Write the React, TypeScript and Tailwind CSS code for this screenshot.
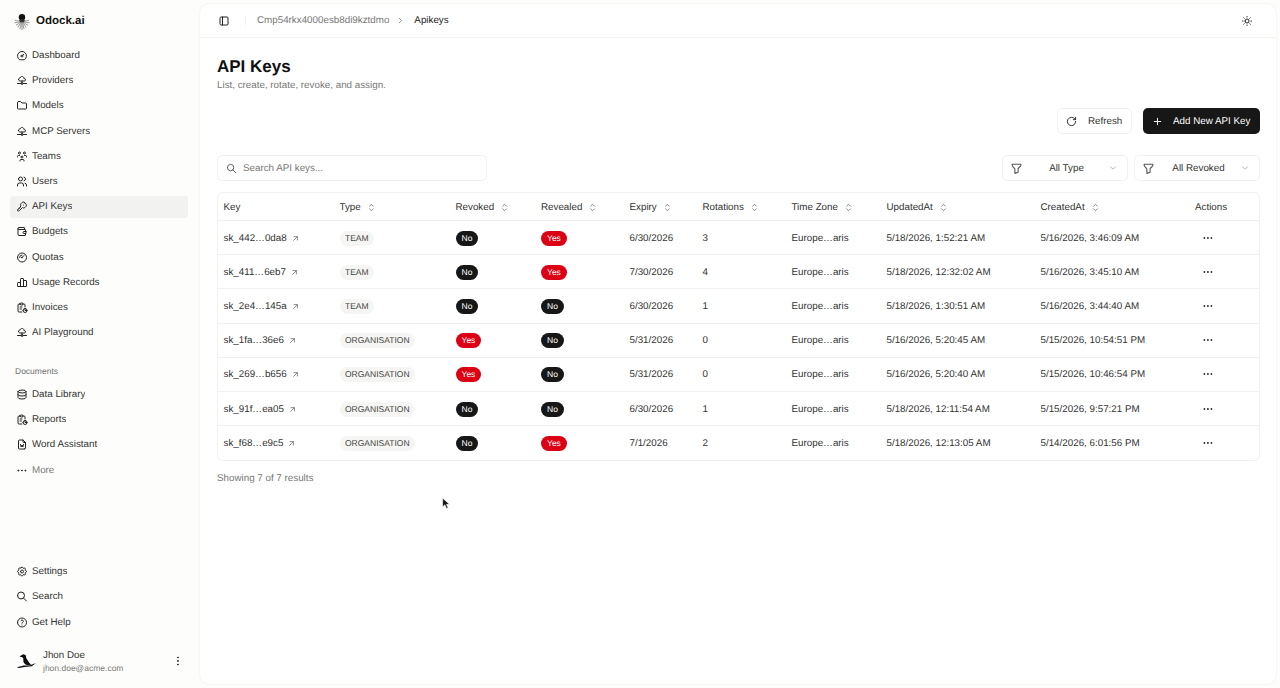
import type { ReactNode } from "react";
import type { IconType } from "react-icons";
import { RotateCw } from "lucide-react";
import {
  TbArrowUpRight,
  TbChartBar,
  TbChevronDown,
  TbChevronRight,
  TbCloudDataConnection,
  TbDashboard,
  TbDatabase,
  TbDots,
  TbDotsVertical,
  TbFileWord,
  TbFilter,
  TbFolder,
  TbGauge,
  TbHelp,
  TbKey,
  TbLayoutSidebar,
  TbPlus,
  TbReport,
  TbSearch,
  TbSelector,
  TbSettings,
  TbSun,
  TbUsers,
  TbUsersGroup,
  TbWallet,
} from "react-icons/tb";

type NavItem = { label: string; icon: IconType; active?: boolean; muted?: boolean };

const mainNav: NavItem[] = [
  { label: "Dashboard", icon: TbDashboard },
  { label: "Providers", icon: TbCloudDataConnection },
  { label: "Models", icon: TbFolder },
  { label: "MCP Servers", icon: TbCloudDataConnection },
  { label: "Teams", icon: TbUsersGroup },
  { label: "Users", icon: TbUsers },
  { label: "API Keys", icon: TbKey, active: true },
  { label: "Budgets", icon: TbWallet },
  { label: "Quotas", icon: TbGauge },
  { label: "Usage Records", icon: TbChartBar },
  { label: "Invoices", icon: TbReport },
  { label: "AI Playground", icon: TbCloudDataConnection },
];

const docNav: NavItem[] = [
  { label: "Data Library", icon: TbDatabase },
  { label: "Reports", icon: TbReport },
  { label: "Word Assistant", icon: TbFileWord },
  { label: "More", icon: TbDots, muted: true },
];

const footerNav: NavItem[] = [
  { label: "Settings", icon: TbSettings },
  { label: "Search", icon: TbSearch },
  { label: "Get Help", icon: TbHelp },
];

const rows = [
  ["sk_442…0da8", "TEAM", "No", "Yes", "6/30/2026", "3", "5/18/2026, 1:52:21 AM", "5/16/2026, 3:46:09 AM"],
  ["sk_411…6eb7", "TEAM", "No", "Yes", "7/30/2026", "4", "5/18/2026, 12:32:02 AM", "5/16/2026, 3:45:10 AM"],
  ["sk_2e4…145a", "TEAM", "No", "No", "6/30/2026", "1", "5/18/2026, 1:30:51 AM", "5/16/2026, 3:44:40 AM"],
  ["sk_1fa…36e6", "ORGANISATION", "Yes", "No", "5/31/2026", "0", "5/16/2026, 5:20:45 AM", "5/15/2026, 10:54:51 PM"],
  ["sk_269…b656", "ORGANISATION", "Yes", "No", "5/31/2026", "0", "5/16/2026, 5:20:40 AM", "5/15/2026, 10:46:54 PM"],
  ["sk_91f…ea05", "ORGANISATION", "No", "No", "6/30/2026", "1", "5/18/2026, 12:11:54 AM", "5/15/2026, 9:57:21 PM"],
  ["sk_f68…e9c5", "ORGANISATION", "No", "Yes", "7/1/2026", "2", "5/18/2026, 12:13:05 AM", "5/14/2026, 6:01:56 PM"],
];

const headers: { label: string; sortable: boolean; width: string }[] = [
  { label: "Key", sortable: false, width: "w-[116px]" },
  { label: "Type", sortable: true, width: "w-[116px]" },
  { label: "Revoked", sortable: true, width: "w-[85.5px]" },
  { label: "Revealed", sortable: true, width: "w-[88.5px]" },
  { label: "Expiry", sortable: true, width: "w-[73px]" },
  { label: "Rotations", sortable: true, width: "w-[89px]" },
  { label: "Time Zone", sortable: true, width: "w-[95px]" },
  { label: "UpdatedAt", sortable: true, width: "w-[154px]" },
  { label: "CreatedAt", sortable: true, width: "w-[154.5px]" },
  { label: "Actions", sortable: false, width: "" },
];

function OdockLogo() {
  return (
    <svg viewBox="0 0 18 20" className="h-[18px] w-[16px] shrink-0" aria-hidden>
      <circle cx="9" cy="4.6" r="3.6" fill="#111" />
      <g stroke="#6a6a6a" strokeWidth="0.8" fill="none" strokeLinecap="round">
        <path d="M6.5 8.2C4.5 9.4 3 8.8 1.4 8M6.5 9.2C4.5 10.8 2.6 10.6 1 10.8M7 10C5.4 11.6 4 13 2.6 13.4M7.5 10.2C6.6 12.4 5.6 14.4 4.6 15.8M8.2 10.4C8 13 7.4 15.6 6.8 17.6M9 10.4V18.6M9.8 10.4C10 13 10.6 15.6 11.2 17.6M10.5 10.2C11.4 12.4 12.4 14.4 13.4 15.8M11 10C12.6 11.6 14 13 15.4 13.4M11.5 9.2C13.5 10.8 15.4 10.6 17 10.8M11.5 8.2C13.5 9.4 15 8.8 16.6 8" />
      </g>
      <ellipse cx="9" cy="8.6" rx="3" ry="1.8" fill="#333" />
    </svg>
  );
}

function BirdAvatar() {
  return (
    <div className="flex size-[21px] shrink-0 items-center justify-center rounded-full bg-white">
      <svg viewBox="0 0 22 22" className="size-[22px]" aria-hidden>
        <path
          d="M3.5 6.5 6 4.6 8 4 10.2 5 10.8 8 13.2 11.8 16 15.5 12 15.4 9.5 14.5 7.8 12 7.6 8.2 6.2 6.8Z"
          fill="#0d0d0d"
        />
        <path d="M1 17.6 8 15.6 14 15.8 21 13.2 16.5 16.4 9 17.2 3 18.4Z" fill="#0d0d0d" />
      </svg>
    </div>
  );
}

function NavLink({ item }: { item: NavItem }) {
  const Icon = item.icon;
  return (
    <a
      className={`flex h-[22px] items-center gap-[4px] rounded-[3px] px-[6px] text-[9.8px] leading-[14px] ${
        item.active ? "bg-[#f2f3f1]" : ""
      } ${item.muted ? "text-[#7b7b7b]" : "text-[#333]"}`}
    >
      <Icon className="size-[12px] shrink-0 -translate-y-[0.5px] text-[#222]" />
      <span className="truncate">{item.label}</span>
    </a>
  );
}

function Sidebar() {
  return (
    <aside className="flex w-[200px] shrink-0 flex-col pb-[12px] pl-[10px] pr-[12px]">
      <div className="flex h-[45px] items-center gap-[6px] px-[4px] pb-[1px]">
        <OdockLogo />
        <span className="text-[11.5px] font-bold text-[#111]">Odock.ai</span>
      </div>
      <nav className="flex flex-col gap-[3.2px]">
        {mainNav.map((item) => (
          <NavLink key={item.label} item={item} />
        ))}
      </nav>
      <div className="mt-[20.5px] px-[5px] text-[8.5px] leading-[12px] text-[#6f6f6f]">Documents</div>
      <div className="mt-[7.5px] flex flex-col gap-[3.2px]">
        {docNav.map((item) => (
          <NavLink key={item.label} item={item} />
        ))}
      </div>
      <div className="mt-auto flex flex-col gap-[3.2px]">
        {footerNav.map((item) => (
          <NavLink key={item.label} item={item} />
        ))}
      </div>
      <div className="mt-[12.5px] flex h-[30px] items-center gap-[6px] px-[6px]">
        <BirdAvatar />
        <div className="min-w-0 flex-1">
          <div className="text-[9.8px] leading-[14px] text-[#333]">Jhon Doe</div>
          <div className="text-[8.5px] leading-[11px] text-[#7a7a7a]">jhon.doe@acme.com</div>
        </div>
        <TbDotsVertical className="mr-[-2px] size-[12px] text-[#222]" />
      </div>
    </aside>
  );
}

function Pill({ value }: { value: string }) {
  return (
    <span
      className={`inline-flex h-[15px] items-center rounded-full px-[6px] text-[8.5px] text-white ${
        value === "Yes" ? "bg-[#dc0014]" : "bg-[#171717]"
      }`}
    >
      {value}
    </span>
  );
}

function Outlined({ className, children }: { className: string; children: ReactNode }) {
  return (
    <div className={`flex items-center rounded-[5px] border border-[#f0f2ed] bg-white ${className}`}>{children}</div>
  );
}

function FilterSelect({ label }: { label: string }) {
  return (
    <Outlined className="h-[26px] w-[126px] pl-[7px] pr-[9px]">
      <TbFilter className="size-[13px] shrink-0 text-[#555]" />
      <span className="flex-1 pl-[2px] text-center text-[9.8px] leading-[15px] text-[#333]">{label}</span>
      <TbChevronDown className="size-[10px] shrink-0 text-[#aaa]" />
    </Outlined>
  );
}

function ApiKeysTable() {
  return (
    <div className="mt-[11px] overflow-hidden rounded-[6px] border border-[#f0f2ed]">
      <table className="w-full table-fixed border-collapse text-[9.8px] leading-[15px] text-[#333]">
        <thead>
          <tr className="h-[27.5px] border-b border-[#eff1ec]">
            {headers.map((h) => (
              <th key={h.label} className={`px-[5.5px] pt-[1px] text-left font-normal ${h.width}`}>
                <span className="inline-flex items-center gap-[5px]">
                  {h.label}
                  {h.sortable ? <TbSelector className="size-[11px] text-[#777]" /> : null}
                </span>
              </th>
            ))}
          </tr>
        </thead>
        <tbody>
          {rows.map((r) => (
            <tr key={r[0]} className="h-[34.2px] border-b border-[#f0f2ed] last:border-b-0">
              <td className="px-[5.5px] pt-[1px]">
                <span className="inline-flex items-center gap-[4px]">
                  {r[0]}
                  <TbArrowUpRight className="size-[9px] text-[#666]" />
                </span>
              </td>
              <td className="px-[5.5px] pt-[1px]">
                <span className="inline-flex h-[15px] items-center rounded-full bg-[#f5f6f3] px-[5.5px] text-[8.5px] text-[#444]">
                  {r[1]}
                </span>
              </td>
              <td className="px-[5.5px] pt-[1px]">
                <Pill value={r[2]} />
              </td>
              <td className="px-[5.5px] pt-[1px]">
                <Pill value={r[3]} />
              </td>
              <td className="px-[5.5px] pt-[1px]">{r[4]}</td>
              <td className="px-[5.5px] pt-[1px]">{r[5]}</td>
              <td className="px-[5.5px] pt-[1px]">Europe…aris</td>
              <td className="whitespace-nowrap px-[5.5px] pt-[1px]">{r[6]}</td>
              <td className="whitespace-nowrap px-[5.5px] pt-[1px]">{r[7]}</td>
              <td className="px-[5.5px]">
                <TbDots className="ml-[7px] size-[12px] text-[#111]" />
              </td>
            </tr>
          ))}
        </tbody>
      </table>
    </div>
  );
}

export default function App() {
  return (
    <div className="relative flex h-[688px] w-[1280px] overflow-hidden bg-[#fdfefb] font-['Liberation_Sans',Arial,sans-serif] [text-rendering:geometricPrecision]">
      <Sidebar />
      <main className="mb-[4px] mr-[4px] mt-[4px] flex min-w-0 flex-1 flex-col rounded-[9px] bg-white shadow-[0_0_2px_rgba(0,0,0,0.1)]">
        <header className="flex h-[34px] shrink-0 items-center border-b border-[#f2f3ef] pl-[18px] pr-[23px]">
          <TbLayoutSidebar className="size-[12px] text-[#222]" />
          <div className="ml-[15px] mr-[11px] h-[9px] w-px bg-[#f0f0f0]" />
          <span className="text-[9.8px] leading-[15px] text-[#777]">Cmp54rkx4000esb8di9kztdmo</span>
          <TbChevronRight className="mx-[7px] mr-[9px] size-[9px] text-[#666]" />
          <span className="text-[9.8px] leading-[15px] text-[#222]">Apikeys</span>
          <TbSun className="ml-auto size-[12px] text-[#222]" />
        </header>
        <div className="flex min-h-0 flex-1 flex-col pl-[17px] pr-[16px]">
          <h1 className="mt-[17px] text-[17px] font-bold leading-[24px] text-[#111]">API Keys</h1>
          <p className="text-[9.8px] leading-[13px] text-[#777]">List, create, rotate, revoke, and assign.</p>
          <div className="mt-[16px] flex justify-end gap-[11px]">
            <Outlined className="h-[26px] w-[75px] pl-[8px]">
              <RotateCw className="size-[11px] text-[#222]" />
              <span className="ml-[11px] text-[9.8px] leading-[15px] text-[#333]">Refresh</span>
            </Outlined>
            <div className="flex h-[26px] w-[117px] items-center rounded-[5px] bg-[#171717] pl-[9px] text-white">
              <TbPlus className="size-[11px]" />
              <span className="ml-[10px] text-[9.8px] leading-[15px]">Add New API Key</span>
            </div>
          </div>
          <div className="mt-[21px] flex items-center">
            <Outlined className="h-[26px] w-[270px] pl-[8px]">
              <TbSearch className="size-[11px] text-[#555]" />
              <span className="ml-[6px] text-[9.8px] leading-[15px] text-[#777]">Search API keys...</span>
            </Outlined>
            <div className="ml-auto flex gap-[6px]">
              <FilterSelect label="All Type" />
              <FilterSelect label="All Revoked" />
            </div>
          </div>
          <ApiKeysTable />
          <p className="mt-[10px] text-[9.8px] leading-[15px] text-[#777]">Showing 7 of 7 results</p>
        </div>
      </main>
      <svg viewBox="0 0 12 18" className="absolute left-[442px] top-[497px] h-[13px] w-[8px]" aria-hidden>
        <path d="M1 1v13l3.4-3 2.4 5.5 2.2-1-2.4-5.2H11Z" fill="#111" stroke="#fff" strokeWidth="0.8" />
      </svg>
    </div>
  );
}
